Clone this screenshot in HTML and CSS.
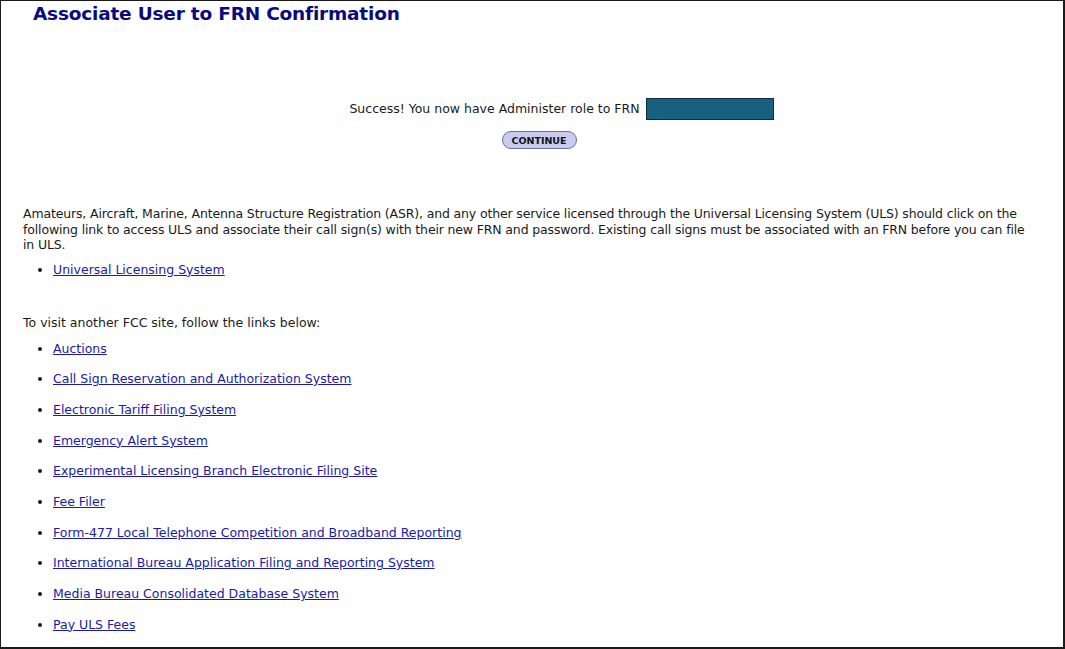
FILE: index.html
```html
<!DOCTYPE html>
<html>
<head>
<meta charset="utf-8">
<link rel="stylesheet" href="styles.css">
</head>
<body>
<div class="frame">
  <h1 class="title">Associate User to FRN Confirmation</h1>
  <div class="success">
    <p class="msg">Success! You now have Administer role to FRN <span class="redact"></span></p>
    <button class="btn" type="button">CONTINUE</button>
  </div>
  <p class="intro">Amateurs, Aircraft, Marine, Antenna Structure Registration (ASR), and any other service licensed through the Universal Licensing System (ULS) should click on the following link to access ULS and associate their call sign(s) with their new FRN and password. Existing call signs must be associated with an FRN before you can file in ULS.</p>
  <ul class="links first">
    <li><a href="#">Universal Licensing System</a></li>
  </ul>
  <p class="visit">To visit another FCC site, follow the links below:</p>
  <ul class="links">
    <li><a href="#">Auctions</a></li>
    <li><a href="#">Call Sign Reservation and Authorization System</a></li>
    <li><a href="#">Electronic Tariff Filing System</a></li>
    <li><a href="#">Emergency Alert System</a></li>
    <li><a href="#">Experimental Licensing Branch Electronic Filing Site</a></li>
    <li><a href="#">Fee Filer</a></li>
    <li><a href="#">Form-477 Local Telephone Competition and Broadband Reporting</a></li>
    <li><a href="#">International Bureau Application Filing and Reporting System</a></li>
    <li><a href="#">Media Bureau Consolidated Database System</a></li>
    <li><a href="#">Pay ULS Fees</a></li>
  </ul>
</div>
</body>
</html>
```
FILE: styles.css
```css
html, body {
  margin: 0;
  padding: 0;
  background: #fff;
}
.frame {
  box-sizing: border-box;
  width: 1065px;
  height: 649px;
  border-style: solid;
  border-color: #1a1a1a;
  border-width: 1px 2px 2px 1px;
  overflow: hidden;
  font-family: "DejaVu Sans", Verdana, sans-serif;
  font-size: 12.5px;
  color: #1a1a1a;
  padding: 0 32px 0 22px;
}
.title {
  margin: 2px 0 0 10px;
  font-size: 18.5px;
  font-weight: bold;
  color: #0a0a7e;
  letter-spacing: -0.2px;
}
.success {
  display: flex;
  flex-direction: column;
  align-items: center;
  margin-top: 74px;
  padding-left: 24px;
}
.msg {
  margin: 0;
  padding-left: 45px;
  display: flex;
  align-items: center;
  gap: 6px;
  line-height: 22px;
}
.redact {
  display: inline-block;
  width: 126px;
  height: 20px;
  background: #17607f;
  border: 1px solid #0e2e3c;
}
.btn {
  margin-top: 11px;
  font-family: "DejaVu Sans", Verdana, sans-serif;
  font-size: 9.5px;
  font-weight: bold;
  color: #111;
  background: #c9cbf1;
  border: 1px solid #6c6f9c;
  border-radius: 10px;
  padding: 2px 6px;
  height: 18px;
  width: 75px;
}
.intro {
  margin: 57px 0 0;
  line-height: 15.5px;
  letter-spacing: -0.15px;
}
.links {
  margin: 0;
  padding-left: 30px;
  list-style: disc;
}
.links.first {
  margin-top: 9px;
}
.links li {
  line-height: 15px;
  margin-bottom: 15.7px;
}
.links a {
  color: #1a1aa8;
  text-decoration: underline;
}
.visit {
  margin: 38px 0 11px;
  line-height: 15px;
}
```
